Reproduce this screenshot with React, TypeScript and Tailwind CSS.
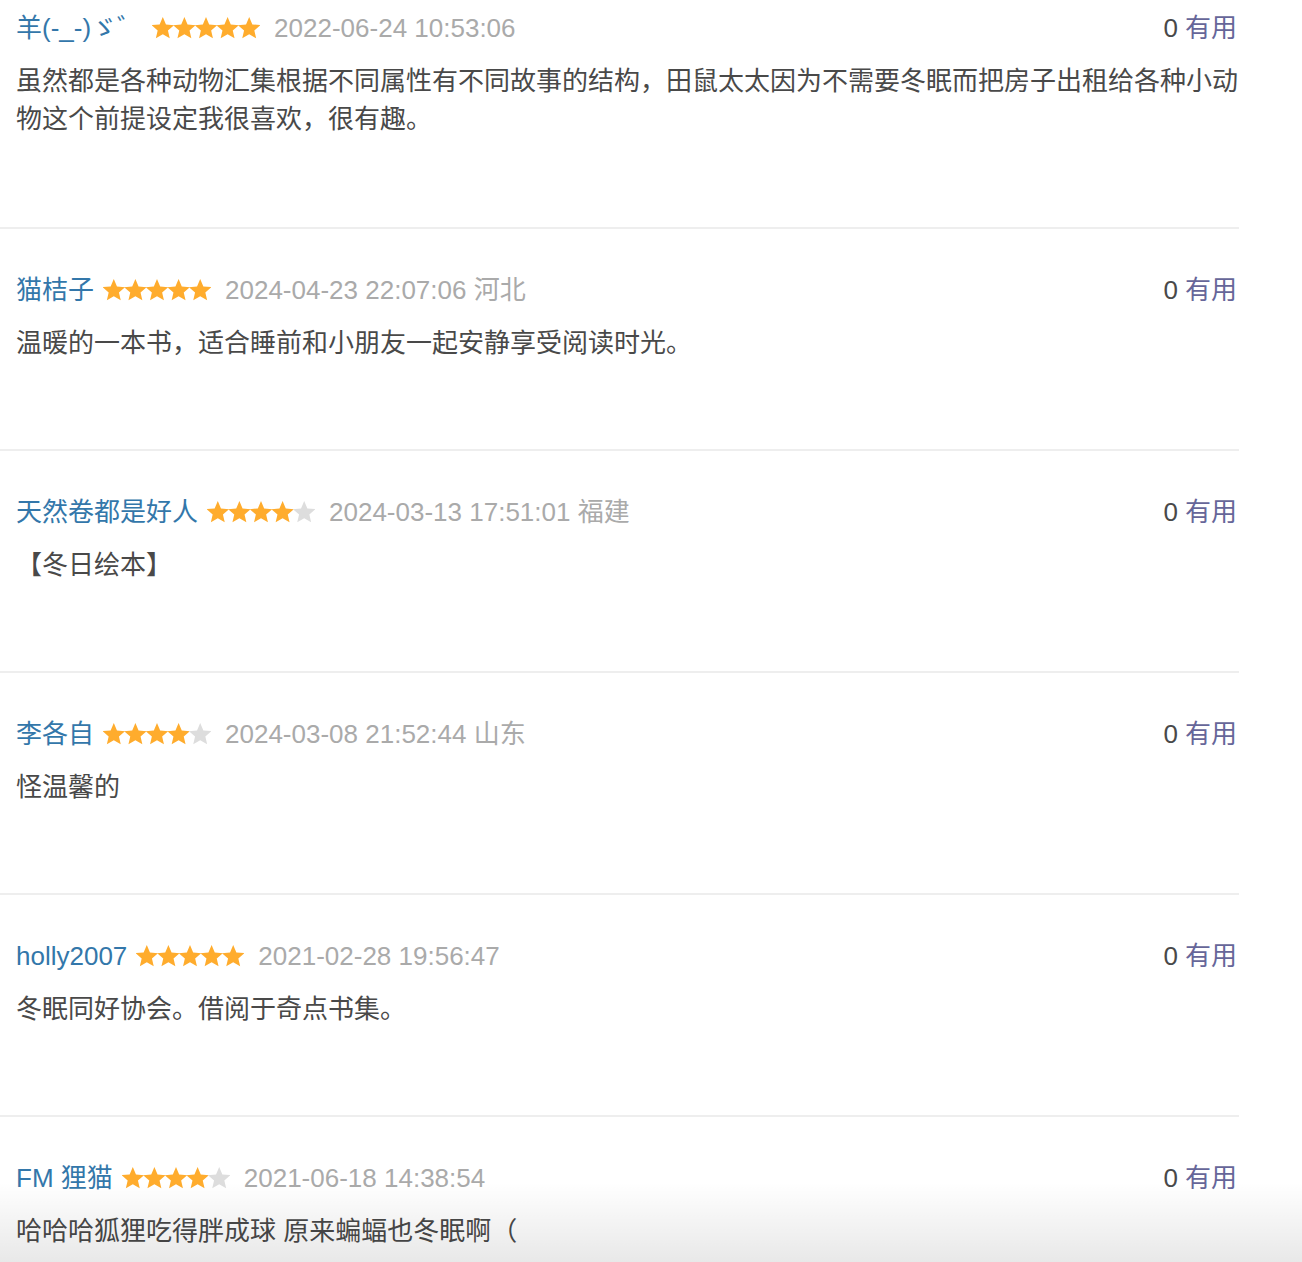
import React from "react";

type Review = {
  name: string;
  stars: number;
  time: string;
  loc?: string;
  body: string[];
};

const reviews: Review[] = [
  {
    name: "羊(-_-)ゞ゛",
    stars: 5,
    time: "2022-06-24 10:53:06",
    body: [
      "虽然都是各种动物汇集根据不同属性有不同故事的结构，田鼠太太因为不需要冬眠而把房子出租给各种小动",
      "物这个前提设定我很喜欢，很有趣。",
    ],
  },
  {
    name: "猫桔子",
    stars: 5,
    time: "2024-04-23 22:07:06",
    loc: "河北",
    body: ["温暖的一本书，适合睡前和小朋友一起安静享受阅读时光。"],
  },
  {
    name: "天然卷都是好人",
    stars: 4,
    time: "2024-03-13 17:51:01",
    loc: "福建",
    body: ["【冬日绘本】"],
  },
  {
    name: "李各自",
    stars: 4,
    time: "2024-03-08 21:52:44",
    loc: "山东",
    body: ["怪温馨的"],
  },
  {
    name: "holly2007",
    stars: 5,
    time: "2021-02-28 19:56:47",
    body: ["冬眠同好协会。借阅于奇点书集。"],
  },
  {
    name: "FM 狸猫",
    stars: 4,
    time: "2021-06-18 14:38:54",
    body: ["哈哈哈狐狸吃得胖成球 原来蝙蝠也冬眠啊（"],
  },
];

function starPath(cx: number, cy: number, R: number, r: number) {
  const pts: string[] = [];
  for (let i = 0; i < 10; i++) {
    const rad = i % 2 === 0 ? R : r;
    const a = -Math.PI / 2 + (i * Math.PI) / 5;
    pts.push(`${(cx + rad * Math.cos(a)).toFixed(2)},${(cy + rad * Math.sin(a)).toFixed(2)}`);
  }
  return "M" + pts.join("L") + "Z";
}

function Stars({ n }: { n: number }) {
  return (
    <svg width="108" height="22" viewBox="0 0 108 22" className="block shrink-0">
      {[0, 1, 2, 3, 4].map((i) => (
        <path
          key={i}
          d={starPath(10.8 + i * 21.6, 11.8, 11.8, 5.4)}
          fill={i < n ? "#ffac2d" : "#dddddd"}
        />
      ))}
    </svg>
  );
}

export default function App() {
  return (
    <div
      className="relative h-[1262px] w-[1302px] overflow-hidden bg-white"
      style={{ fontFamily: '"Liberation Sans", "Noto Sans CJK SC", sans-serif' }}
    >
      <div className="-mt-[33px] w-[1239px]">
        {reviews.map((r, idx) => (
          <div
            key={idx}
            className={
              idx === 0
                ? "border-b-2 border-[#eeeeee] pl-4 pr-[2px] pt-[42px] pb-[89px]"
                : "border-b-2 border-[#eeeeee] pl-4 pr-[2px] pt-[42px] pb-[87px]"
            }
          >
            <div className="flex h-[38px] items-center justify-between whitespace-nowrap text-[26px] leading-[38px]">
              <div className="flex items-center">
                <span className="text-[#3377aa]">{r.name}</span>
                <span className="ml-[9px]">
                  <Stars n={r.stars} />
                </span>
                <span className="ml-[14px] text-[#aaaaaa]">
                  {r.time}
                  {r.loc ? " " + r.loc : ""}
                </span>
              </div>
              <div>
                <span className="text-[#494949]">0</span>
                <span className="ml-[7px] text-[#666699]">有用</span>
              </div>
            </div>
            <div className="mt-[15px] whitespace-nowrap text-[26px] leading-[38px] text-[#494949]">
              {r.body.map((l, i) => (
                <div key={i}>{l}</div>
              ))}
            </div>
          </div>
        ))}
      </div>
      <div className="pointer-events-none absolute bottom-0 left-0 h-[80px] w-full bg-gradient-to-b from-black/0 to-black/[0.09]" />
    </div>
  );
}
